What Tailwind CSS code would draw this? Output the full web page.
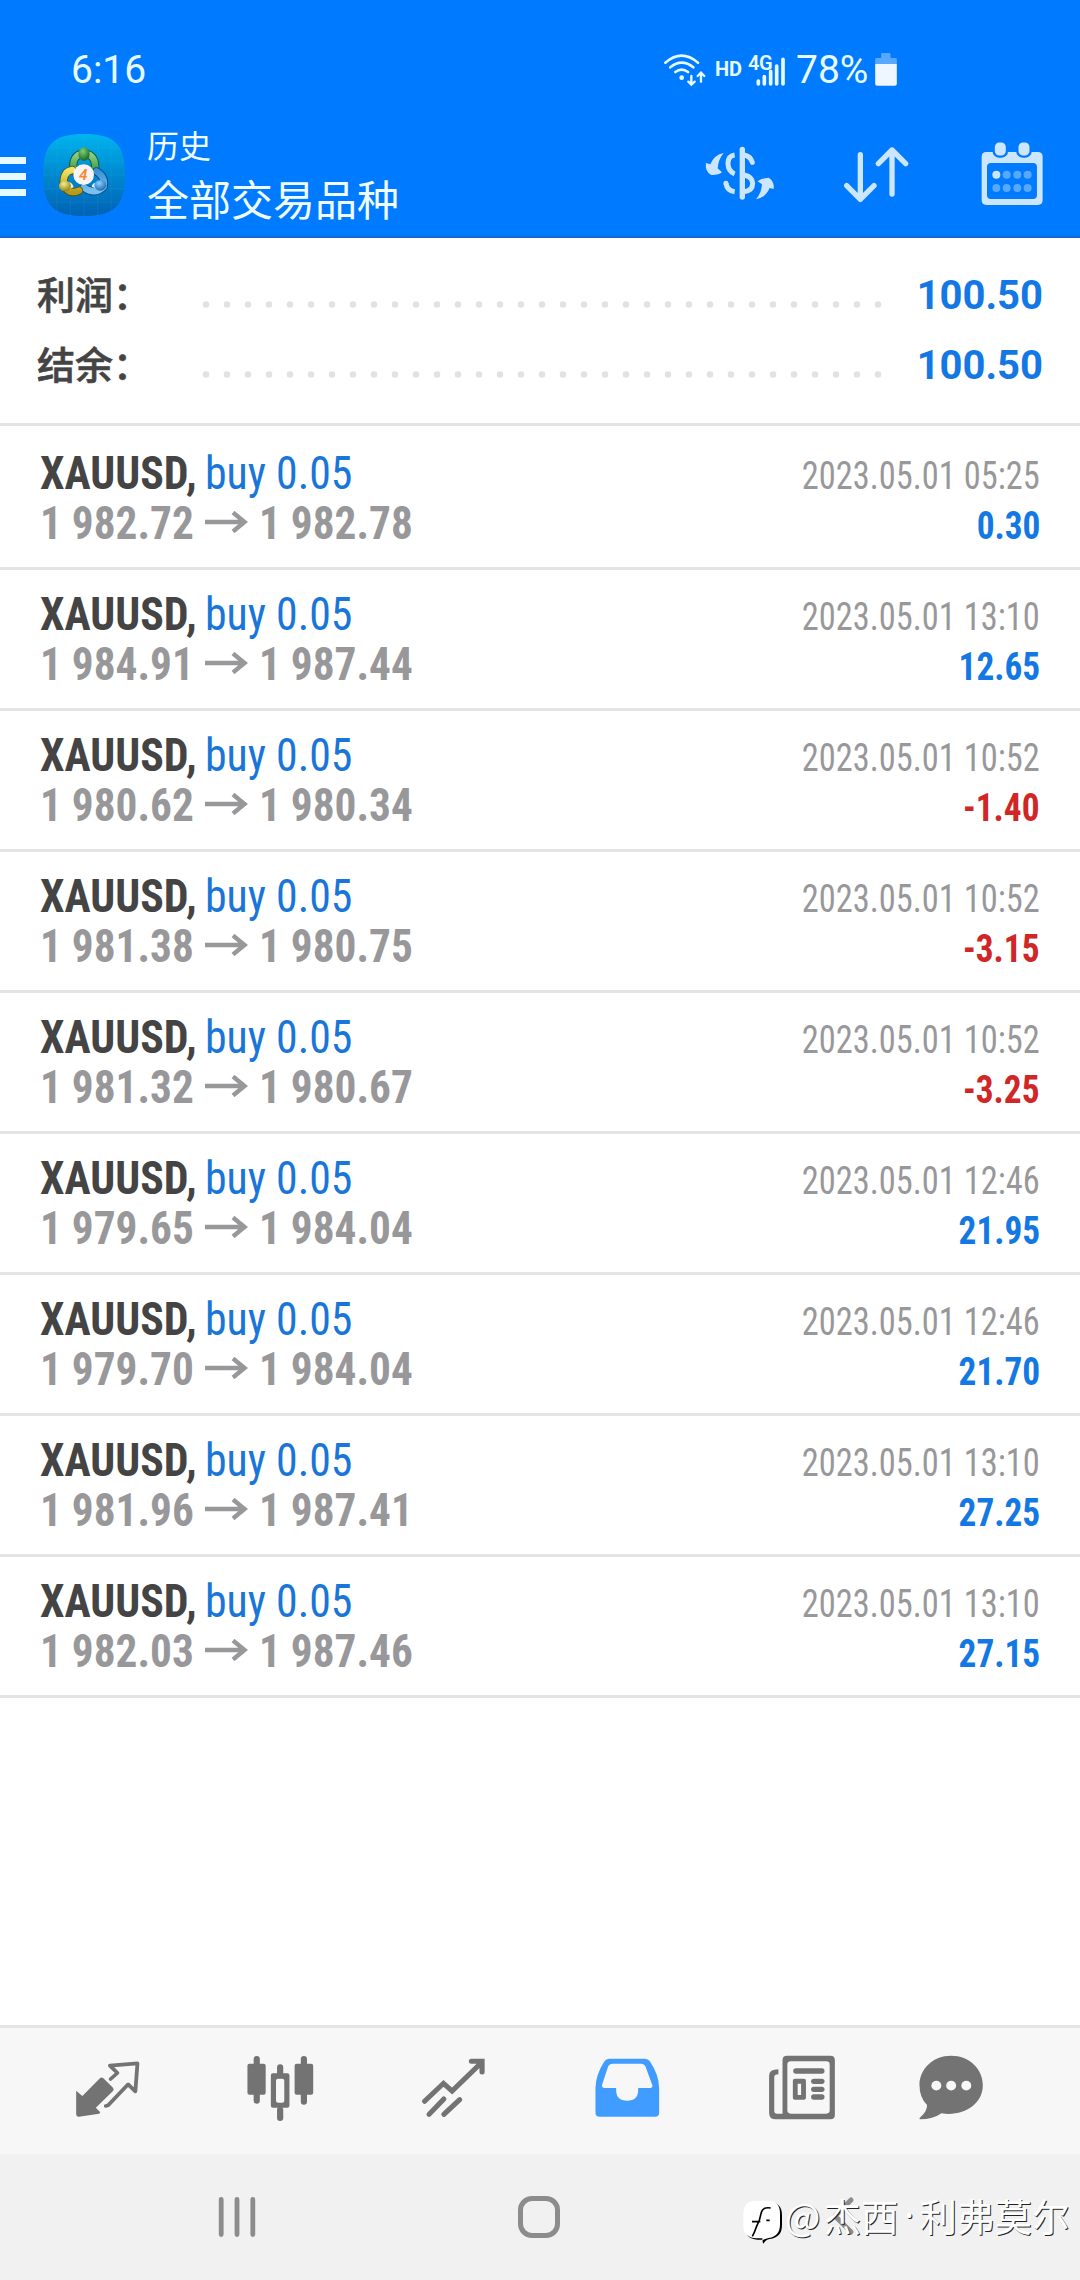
<!DOCTYPE html>
<html lang="zh-CN">
<head>
<meta charset="utf-8">
<title>历史</title>
<script src="https://cdn.jsdelivr.net/npm/@tailwindcss/browser@4"></script>
</head>
<body class="w-[1080px] h-[2280px] overflow-hidden bg-white flex flex-col font-['Roboto','Noto_Sans_CJK_SC',sans-serif] whitespace-nowrap">

<header class="h-[238px] shrink-0 bg-[#007aff] border-b-2 border-[#1468d2] text-[#e6fbff]">
  <div class="flex items-center pt-[40px] h-[99px] pl-[71px]">
    <span class="text-[39px] leading-[59px] w-[592px] mt-[2px]">6:16</span>
    <svg class="w-[44px] h-[35.3px]" viewBox="68 58 132 106" fill="none" stroke="currentColor" stroke-width="8" stroke-linecap="round">
      <path d="M75 90Q124 48 173 90M90 104Q124 76 159 104M105 118Q124 104 143 118"/>
      <circle cx="124" cy="135" r="7" fill="currentColor" stroke="none"/>
      <path d="M153 130V155M144 147L153 156L163 147M182 147V121M172 130L182 120L192 130" stroke-width="7"/>
    </svg>
    <span class="text-[20px] font-bold leading-[20px] ml-[8px] w-[33px] mt-[-2px]">HD</span>
    <div class="relative w-[40px] h-[36px]">
      <span class="absolute left-0 top-[1px] text-[20px] leading-[20px] font-semibold tracking-[-0.5px]">4G</span>
      <svg class="absolute left-[8px] top-[4px] w-[29px] h-[31px]" viewBox="348 70 87 93" fill="none" stroke="currentColor" stroke-width="11" stroke-linecap="round">
        <path d="M355 145V154M373 132V154M392 116V154M410 100V154M429 80V154"/>
      </svg>
    </div>
    <span class="text-[39px] leading-[59px] ml-[8px] w-[79px] mt-[2px]">78%</span>
    <svg class="w-[22px] h-[33px]" viewBox="704 63 65 99">
      <path d="M722 66q0-3 3-3h22q3 0 3 3v12h15q4 0 4 4v15h-65V82q0-4 4-4h14z" fill="#57a9ff"/>
      <path d="M704 96h65v59q0 6-6 6h-53q-6 0-6-6z" fill="#eef7ff"/>
    </svg>
  </div>
  <div class="flex items-start h-[137px]">
    <div class="mt-[58px] w-[26px] flex flex-col gap-[9px]">
      <i class="h-[7px] bg-[#e6fbff]"></i><i class="h-[7px] bg-[#e6fbff]"></i><i class="h-[7px] bg-[#e6fbff]"></i>
    </div>
    <svg class="ml-[17px] mt-[35px] w-[82px] h-[82px]" viewBox="0 0 246 246">
      <defs>
        <linearGradient id="sq" x1="0" y1="0" x2="0" y2="1"><stop offset="0" stop-color="#00b4ee"/><stop offset=".5" stop-color="#0088cf"/><stop offset="1" stop-color="#0062b4"/></linearGradient>
        <linearGradient id="gr" x1="0" y1="0" x2="0" y2="1"><stop offset="0" stop-color="#8fd088"/><stop offset="1" stop-color="#3c9a3e"/></linearGradient>
        <linearGradient id="ye" x1="0" y1="0" x2="0" y2="1"><stop offset="0" stop-color="#efe36a"/><stop offset="1" stop-color="#b69a1c"/></linearGradient>
        <linearGradient id="bl" x1="0" y1="0" x2="0" y2="1"><stop offset="0" stop-color="#3b93d8"/><stop offset="1" stop-color="#79c0f0"/></linearGradient>
        <radialGradient id="gb" cx=".4" cy=".3" r=".8"><stop offset="0" stop-color="#7fd07a"/><stop offset="1" stop-color="#0d5c18"/></radialGradient>
        <radialGradient id="yb" cx=".4" cy=".3" r=".8"><stop offset="0" stop-color="#f6ee8a"/><stop offset="1" stop-color="#8c7408"/></radialGradient>
        <radialGradient id="bb" cx=".4" cy=".3" r=".8"><stop offset="0" stop-color="#8fd0ff"/><stop offset="1" stop-color="#0d5fa8"/></radialGradient>
      </defs>
      <path d="M123 0C215 0 246 31 246 123S215 246 123 246S0 215 0 123S31 0 123 0Z" fill="url(#sq)"/>
      <path d="M42 10V236M82 2V244M123 0V246M164 2V244M204 10V236M10 42H236M2 82H244M0 123H246M2 164H244M10 204H236" stroke="#5fd0ff" stroke-opacity=".14" stroke-width="2"/>
      <g stroke-linejoin="round" stroke-linecap="round" fill="none">
        <path d="M92 112Q84 62 123 58Q162 62 156 112" stroke="#145a3a" stroke-width="25"/>
        <path d="M92 112Q84 62 123 58Q162 62 156 112" stroke="url(#gr)" stroke-width="19"/>
        <path d="M160 112Q188 128 182 158Q156 184 122 160" stroke="#0b4d86" stroke-width="25"/>
        <path d="M160 112Q188 128 182 158Q156 184 122 160" stroke="url(#bl)" stroke-width="19"/>
        <path d="M88 108Q60 112 62 152Q78 184 108 170" stroke="#4d5a1c" stroke-width="25"/>
        <path d="M88 108Q60 112 62 152Q78 184 108 170" stroke="url(#ye)" stroke-width="19"/>
      </g>
      <path d="M66 146q22-6 26 14l-18 6z" fill="#eef3d8"/><path d="M160 146q-12 0-14 12l16 6z" fill="#e4f3ff"/>
      <ellipse cx="123" cy="60" rx="17" ry="20" fill="url(#gb)"/>
      <ellipse cx="66" cy="156" rx="18" ry="16" fill="url(#yb)"/>
      <ellipse cx="172" cy="154" rx="18" ry="16" fill="url(#bb)"/>
      <circle cx="122" cy="122" r="31" fill="#f7f5f4"/>
      <text x="121" y="138" text-anchor="middle" font-family="Roboto" font-size="46" font-weight="600" fill="#f58a35" font-style="italic">4</text>
    </svg>
    <div class="ml-[22px] mt-[27px] w-[556px] flex flex-col text-[#f0fdff]">
      <span class="text-[32px] leading-[42px]">历史</span>
      <span class="text-[42px] leading-[54px] mt-[7px]">全部交易品种</span>
    </div>
    <svg class="mt-[41px] w-[73.3px] h-[66.7px] shrink-0" viewBox="190 330 220 200" fill="none" stroke="#cce6ff" stroke-width="15">
      <path d="M308 358V501" stroke-linecap="round" stroke-width="16"/>
      <path d="M285 375Q265 378 265 400Q265 424 285 432"/>
      <path d="M259 460Q262 482 285 485"/>
      <circle cx="259" cy="460" r="7.5" fill="#cce6ff" stroke="none"/>
      <path d="M314 375Q333 379 338 397" stroke-linecap="round"/>
      <path d="M314 435Q339 441 339 460Q339 482 314 485"/>
      <g fill="#cce6ff" stroke="none">
        <path d="M252 369Q224 374 212 403L199 399Q195 425 215 435Q236 436 247 427L234 415Q236 388 252 369Z"/>
        <path d="M349 508Q378 503 390 474L402 477Q405 453 387 443Q366 444 354 454L367 463Q366 489 349 508Z"/>
      </g>
    </svg>
    <svg class="ml-[63.3px] mt-[41px] w-[71.7px] h-[66.7px] shrink-0" viewBox="600 330 215 200" fill="none" stroke="#cce6ff" stroke-width="16" stroke-linecap="round" stroke-linejoin="round">
      <path d="M661 374V508M620 467L661 508L702 467M756 492V360M715 401L756 360L797 401"/>
    </svg>
    <svg class="ml-[66.7px] mt-[41px] w-[68.3px] h-[66.7px] shrink-0" viewBox="1015 330 205 200">
      <path fill-rule="evenodd" d="M1040 366H1195Q1209 366 1209 380V511Q1209 525 1195 525H1040Q1026 525 1026 511V380Q1026 366 1040 366ZM1054 399Q1042 399 1042 411V495Q1042 507 1054 507H1180Q1192 507 1192 495V411Q1192 399 1180 399Z" fill="#cce6ff"/>
      <g fill="#cce6ff" stroke="#007aff" stroke-width="7"><rect x="1062" y="334" width="40" height="46" rx="17"/><rect x="1133" y="334" width="40" height="46" rx="17"/></g>
      <circle cx="1070" cy="434" r="12" fill="#cce6ff"/>
      <g fill="#57a8ff"><circle cx="1101" cy="434" r="12"/><circle cx="1133" cy="434" r="12"/><circle cx="1164" cy="434" r="12"/><circle cx="1070" cy="474" r="12"/><circle cx="1101" cy="474" r="12"/><circle cx="1133" cy="474" r="12"/><circle cx="1164" cy="474" r="12"/></g>
    </svg>
  </div>
</header>

<section class="h-[188px] shrink-0 border-b-3 border-[#e4e4e4] pt-[23px] pl-[37px] pr-[37px]">
  <div class="flex items-center h-[70px]">
    <span class="w-[165px] text-[38px] leading-[70px] font-medium text-[#444] [-webkit-text-stroke:0.6px_#444]">利润：</span>
    <svg class="w-[682px] h-[7px] mt-[17px]" viewBox="0 0 682 7"><path d="M4 3.5H677" stroke="#e2e2e2" stroke-width="6.5" stroke-linecap="round" stroke-dasharray="0 21"/></svg>
    <span class="grow text-right text-[40px] leading-[70px] font-bold text-[#1378e3]">100.50</span>
  </div>
  <div class="flex items-center h-[70px]">
    <span class="w-[165px] text-[38px] leading-[70px] font-medium text-[#444] [-webkit-text-stroke:0.6px_#444]">结余：</span>
    <svg class="w-[682px] h-[7px] mt-[17px]" viewBox="0 0 682 7"><path d="M4 3.5H677" stroke="#e2e2e2" stroke-width="6.5" stroke-linecap="round" stroke-dasharray="0 21"/></svg>
    <span class="grow text-right text-[40px] leading-[70px] font-bold text-[#1378e3]">100.50</span>
  </div>
</section>

<main id="deals" class="grow pt-[3px]"></main>

<nav class="h-[129px] shrink-0 bg-[#f7f7f7] border-t-3 border-[#e3e5e4] pt-[25.3px] pl-[71px] grid grid-cols-[173px_172.8px_174.2px_174.6px_149.2px_72.3px] text-[#737373]">
  <svg class="w-[72.3px] h-[70px]" preserveAspectRatio="none" viewBox="206 130 210 210">
    <path fill="currentColor" d="M221 243L239 259L290 206Q295 201 300 206L328 234Q332 239 328 244L278 294L291 308L288 312L229 321Q221 322 221 314Z"/>
    <path fill="none" stroke="currentColor" stroke-width="11" stroke-linecap="round" stroke-linejoin="round" d="M321 208L341 190L319 168L399 161L393 245L372 224L314 287L307 289"/>
  </svg>
  <svg class="w-[72.3px] h-[70px]" preserveAspectRatio="none" viewBox="708 130 210 210" fill="currentColor">
    <rect x="718" y="162" width="53" height="93" rx="6"/><rect x="855" y="162" width="54" height="93" rx="6"/>
    <path fill-rule="evenodd" d="M792 191H834Q840 191 840 197V288Q840 294 834 294H792Q786 294 786 288V197Q786 191 792 191ZM807 207Q801 207 801 213V273Q801 279 807 279H819Q825 279 825 273V213Q825 207 819 207Z"/>
    <path fill="none" stroke="currentColor" stroke-width="18" stroke-linecap="round" d="M745 148V170M745 245V273M882 148V170M882 245V276M813 173V192M813 300V325"/>
  </svg>
  <svg class="w-[72.3px] h-[70px]" preserveAspectRatio="none" viewBox="1210 130 210 210" fill="none" stroke="currentColor" stroke-width="15" stroke-linecap="round">
    <path d="M1232 275L1287 221L1312 244L1396 160M1368 155H1399V187M1288 268L1245 314M1334 270L1288 314"/>
  </svg>
  <svg class="w-[72.3px] h-[70px]" preserveAspectRatio="none" viewBox="148 130 210 210">
    <path fill="#409cff" fill-rule="evenodd" d="M200 147H305Q314 147 319 155Q345 195 346 235V309Q346 321 334 321H173Q161 321 161 309V235Q162 195 187 155Q192 147 200 147ZM210 162Q201 162 198 170L180 226Q179 235 188 235H221V241Q221 273 253 273Q285 273 285 241V235H320Q328 234 326 226L306 170Q303 162 294 162Z"/>
  </svg>
  <svg class="w-[72.3px] h-[70px]" preserveAspectRatio="none" viewBox="655 130 210 210">
    <path fill="currentColor" fill-rule="evenodd" d="M716 138H842Q855 138 855 151V316Q855 329 842 329H684Q664 329 664 309V198Q664 179 691 179V194Q679 194 679 202V305Q679 312 686 312H703V151Q703 138 716 138ZM727 155Q717 155 717 165V302Q717 312 727 312H830Q840 312 840 302V165Q840 155 830 155Z"/>
    <g fill="currentColor"><rect x="734" y="176" width="91" height="16" rx="8"/><rect x="786" y="207" width="39" height="16" rx="8"/><rect x="786" y="231" width="39" height="16" rx="8"/><rect x="786" y="254" width="39" height="16" rx="8"/></g>
    <path fill="currentColor" fill-rule="evenodd" d="M739 207H765Q771 207 771 213V265Q771 270 765 270H739Q733 270 733 265V213Q733 207 739 207ZM747 222V256H757V222Z"/>
  </svg>
  <svg class="w-[72.3px] h-[70px]" preserveAspectRatio="none" viewBox="1088 130 210 210">
    <path fill="currentColor" d="M1193 138C1246 138 1285 178 1285 226C1285 285 1228 321 1165 311Q1140 329 1103 329Q1098 327 1105 321Q1123 306 1123 286Q1101 264 1101 226C1101 178 1140 138 1193 138Z"/>
    <g fill="#f7f7f7"><circle cx="1150" cy="228" r="14.5"/><circle cx="1193" cy="228" r="14.5"/><circle cx="1237" cy="228" r="14.5"/></g>
  </svg>
</nav>

<footer class="relative h-[126px] shrink-0 bg-[#f1f1f1] flex items-start pl-[218px]">
  <svg class="w-[38px] h-[42px] mt-[42px]" viewBox="0 0 38 42" stroke="#8c8c8c" stroke-width="4.8" stroke-linecap="round"><path d="M3.2 3.5V38.5M19 3.5V38.5M34.8 3.5V38.5"/></svg>
  <div class="ml-[262px] mt-[42px] w-[42px] h-[42px] border-5 border-[#8c8c8c] rounded-[14px]"></div>
  <svg class="ml-[270px] mt-[42px] w-[28px] h-[42px]" viewBox="0 0 28 42" fill="none" stroke="#8c8c8c" stroke-width="5" stroke-linecap="round" stroke-linejoin="round"><path d="M21 4L5 20L21 36"/></svg>
  <!-- author watermark laid over the navigation keys -->
  <div class="absolute left-[743px] top-[36px] flex items-start h-[54px] text-white">
    <svg class="w-[42px] h-[48px] mt-[9px] overflow-visible" viewBox="70 116 126 144">
      <path d="M113 126H148Q187 126 187 165V195Q187 232 150 236Q138 238 131 250Q128 247 129 238H113Q76 236 76 198V165Q76 126 113 126Z" fill="#000"/>
      <path d="M110 121H145Q181 121 181 160V192Q181 229 147 233Q135 235 128 240V234H110Q71 232 71 195V160Q71 121 110 121Z" fill="#fff"/>
      <path d="M153 143Q130 139 125 156Q121 180 110 200Q104 218 98 228M97 184H122M140 180H150" fill="none" stroke="#000" stroke-width="5"/>
    </svg>
    <div class="flex text-[37.5px] leading-[50px] font-['Noto_Sans_CJK_SC',sans-serif] [text-shadow:1px_1px_0_#222]">
      <span class="w-[38.5px]">@</span><span>杰西</span><span class="w-[21px] text-center font-['Noto_Sans',sans-serif]">·</span><span>利弗莫尔</span>
    </div>
  </div>
</footer>

<script>
const deals = [
  ['1 982.72','1 982.78','2023.05.01 05:25','0.30'],
  ['1 984.91','1 987.44','2023.05.01 13:10','12.65'],
  ['1 980.62','1 980.34','2023.05.01 10:52','-1.40'],
  ['1 981.38','1 980.75','2023.05.01 10:52','-3.15'],
  ['1 981.32','1 980.67','2023.05.01 10:52','-3.25'],
  ['1 979.65','1 984.04','2023.05.01 12:46','21.95'],
  ['1 979.70','1 984.04','2023.05.01 12:46','21.70'],
  ['1 981.96','1 987.41','2023.05.01 13:10','27.25'],
  ['1 982.03','1 987.46','2023.05.01 13:10','27.15'],
];
document.getElementById('deals').innerHTML = deals.map(([open, close, time, profit]) => `
  <div class="h-[141px] border-b-3 border-[#e4e4e4] pt-[19px] pl-[40px] pr-[40px] font-['Roboto_Condensed','Roboto',sans-serif] font-stretch-75%">
    <div class="flex items-baseline h-[50px] leading-[50px]">
      <b class="w-[165px] text-[46px] font-bold text-[#444] origin-left scale-x-[0.951]">XAUUSD,</b>
      <span class="text-[46px] text-[#1976d8] origin-left scale-x-[0.952]">buy 0.05</span>
      <span class="ml-auto text-[39px] text-[#98989b] origin-right scale-x-[0.882]">${time}</span>
    </div>
    <div class="flex items-baseline h-[50px] leading-[50px] font-bold">
      <span class="w-[165px] text-[46px] text-[#98989b] origin-left scale-x-[0.941]">${open}</span>
      <svg class="w-[43px] h-[22px] mr-[10.5px] mt-[12.5px] self-start text-[#98989b]" viewBox="0 0 43 22" fill="none" stroke="currentColor" stroke-width="4.4"><path d="M0 11H39M28 1.5L39.5 11L28 20.5"/></svg>
      <span class="text-[46px] text-[#98989b] origin-left scale-x-[0.941]">${close}</span>
      <span class="ml-auto text-[39px] origin-right scale-x-[0.905] ${profit[0] === '-' ? 'text-[#d02626]' : 'text-[#1378e3]'}">${profit}</span>
    </div>
  </div>`).join('');
</script>
</body>
</html>
